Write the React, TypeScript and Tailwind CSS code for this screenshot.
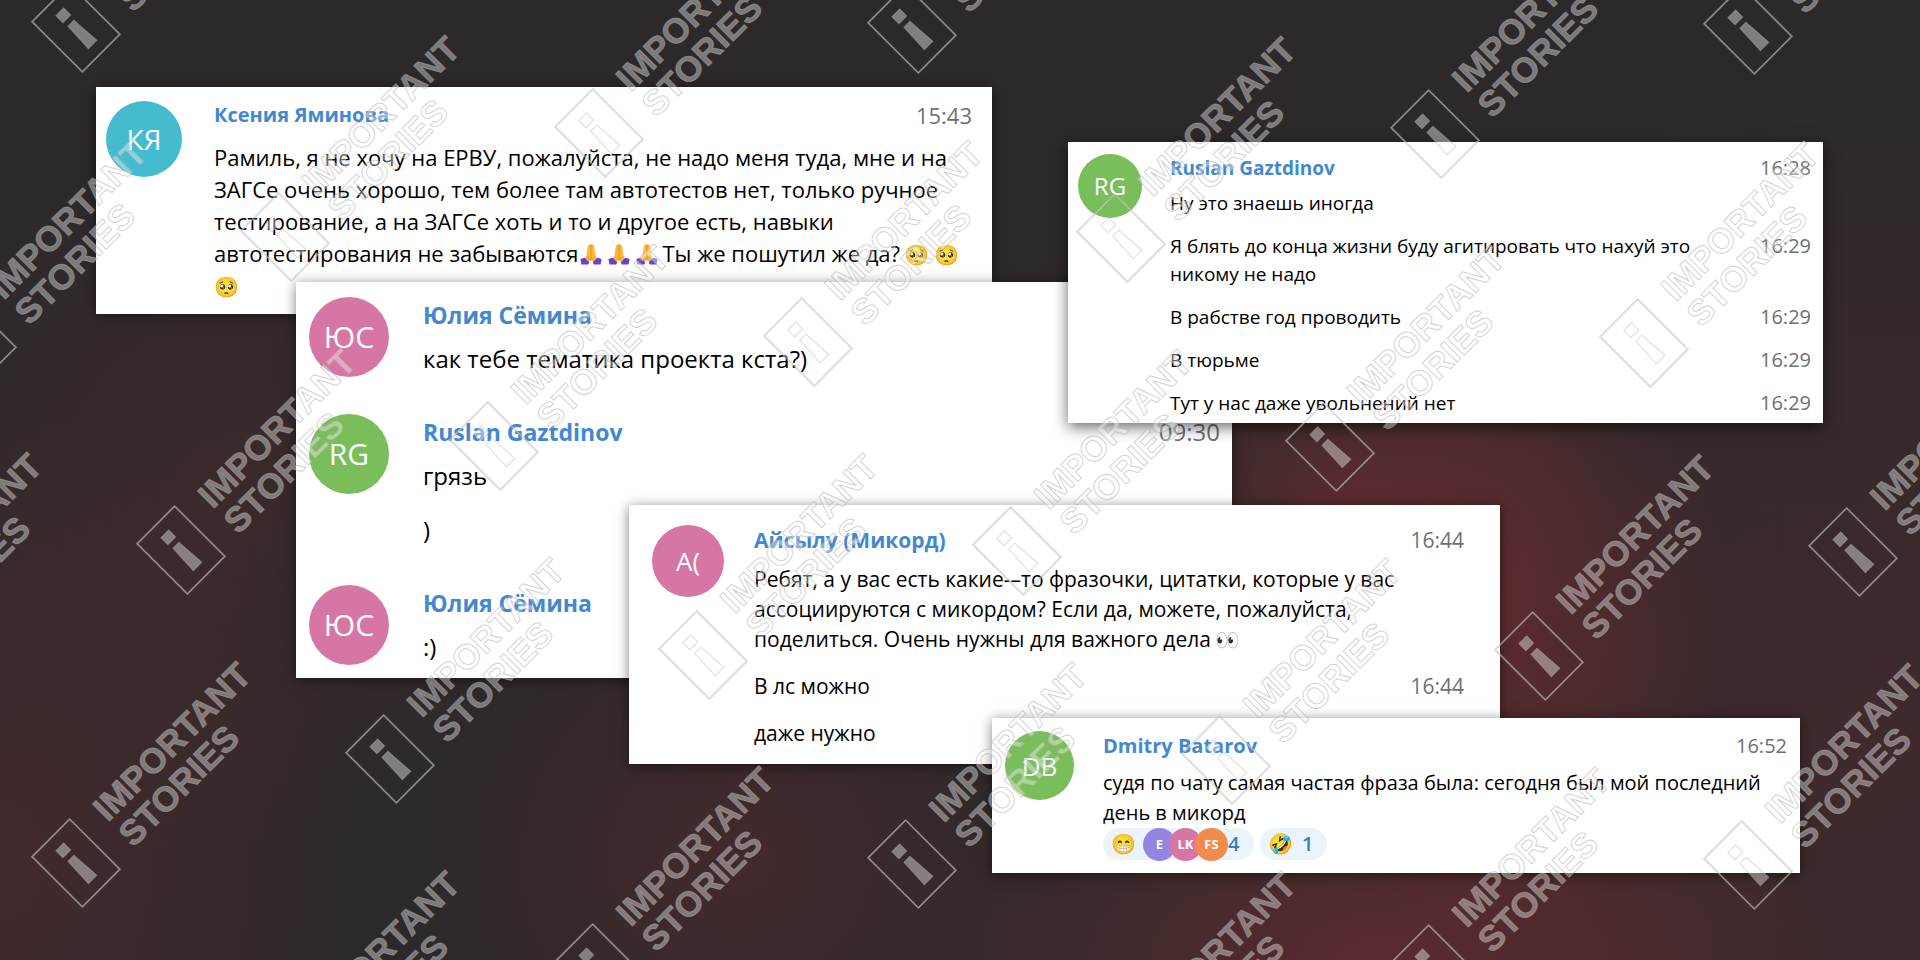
import type { ReactNode } from "react";

// Watermark tiles sit on a slanted lattice, so the spots are computed once
const marks: { left: number; top: number }[] = [];
for (let i = -8; i <= 8; i++) {
  for (let j = -8; j <= 12; j++) {
    const left = 49 + i * 104.5 + j * 209;
    const top = 827 - i * 313 + j * 209;
    if (left > -260 && left < 1900 && top > -60 && top < 1120) {
      marks.push({ left, top });
    }
  }
}

function Watermark({ left, top }: { left: number; top: number }) {
  return (
    <div
      className="absolute flex items-center gap-6 origin-[27px_36px] -rotate-45"
      style={{ left, top }}
    >
      <svg width="54" height="72" viewBox="0 0 54 72" className="shrink-0 overflow-visible">
        <rect x="0.5" y="0.5" width="53" height="71" fill="none" stroke="#b0b0b0" strokeOpacity="0.5" strokeWidth="2" />
        <rect x="0.5" y="0.5" width="53" height="71" fill="none" stroke="#fff" strokeOpacity="0.4" strokeWidth="0.8" />
        <g fill="#fff" fillOpacity="0.4" stroke="#b0b0b0" strokeOpacity="0.45">
          <path d="M21.500 13h11v10h-11z" />
          <path d="M22.500 29h8.500l2 30.500h-12z" />
        </g>
      </svg>
      <div className="font-['Liberation_Sans',sans-serif] text-[35px] leading-9 font-bold text-white/40 [-webkit-text-stroke:1px_rgba(168,168,168,0.5)]">
        <p>IMPORTANT</p>
        <p>STORIES</p>
      </div>
    </div>
  );
}

// Folded hands with purple sleeves
function Hands() {
  return (
    <svg viewBox="0 0 24 24" className="ml-0.5 mr-1 inline-block size-[22px] align-[-3px]">
      <path d="M11.500 1.500C9.500 1 8.500 3 8.300 5L7 14l-2.500 4 4 3.500 3.500-3 3.500 3 4-3.500L17 14l-1.300-9c-.2-2-1.200-4-3.200-3.500z" fill="#fcb93c" />
      <path d="M12 2v16.500" stroke="#e08a1e" strokeWidth="1" />
      <path d="M8.500 14.500c0 2 1.500 3.500 3.500 4 2-.5 3.500-2 3.500-4" fill="none" stroke="#e89a28" />
      <path d="M0.500 17.500l4.500-1.500 5 5-1 2.500H1.500z" fill="#6a3fd0" />
      <path d="M23.500 17.500L19 16l-5 5 1 2.500h7.500z" fill="#6a3fd0" />
    </svg>
  );
}

function Name({ children }: { children: ReactNode }) {
  return <h2 className="font-bold text-[#4387d2]">{children}</h2>;
}

function Time({ children }: { children: ReactNode }) {
  return <time className="text-[#6d7175]">{children}</time>;
}

function App() {
  return (
    <main className="relative min-h-screen overflow-hidden font-['Open_Sans','Noto_Sans',sans-serif] text-black bg-[#2d292b] bg-[radial-gradient(240px_320px_at_1490px_620px,rgba(120,44,48,0.6),transparent),radial-gradient(260px_220px_at_1340px_500px,rgba(120,44,48,0.5),transparent),radial-gradient(480px_240px_at_1380px_960px,rgba(120,44,48,0.6),transparent),radial-gradient(360px_460px_at_0px_860px,rgba(110,42,46,0.35),transparent),radial-gradient(340px_360px_at_230px_500px,rgba(100,42,46,0.26),transparent),radial-gradient(320px_300px_at_740px_860px,rgba(110,42,46,0.34),transparent),radial-gradient(640px_680px_at_1860px_760px,rgba(100,42,46,0.34),transparent)]">
      {/* Ксения Яминова */}
      <article className="absolute left-[96px] top-[87px] w-[896px] flex gap-8 bg-white pl-[10px] pr-5 pt-3 pb-[13px] text-[22px] leading-8 shadow-[0_2px_12px_rgba(0,0,0,0.5)]">
        <div className="mt-0.5 flex size-[76px] shrink-0 items-center justify-center rounded-full bg-[#45bbcf] text-[28px] text-white">
          КЯ
        </div>
        <div className="grow whitespace-nowrap">
          <div className="flex justify-between">
            <div className="text-[20px]">
              <Name>Ксения Яминова</Name>
            </div>
            <Time>15:43</Time>
          </div>
          <p className="mt-[10px]">
            Рамиль, я не хочу на ЕРВУ, пожалуйста, не надо меня туда, мне и на
            <br />
            ЗАГСе очень хорошо, тем более там автотестов нет, только ручное
            <br />
            тестирование, а на ЗАГСе хоть и то и другое есть, навыки
            <br />
            автотестирования не забываются
            <Hands />
            <Hands />
            <Hands />
            Ты же пошутил же да?
            <span className="ml-1 text-[20px] leading-none">🥺 🥺</span>
            <br />
            <span className="text-[20px] leading-none">🥺</span>
          </p>
        </div>
      </article>

      {/* Юлия Сёмина */}
      <article className="absolute left-[296px] top-[282px] w-[936px] flex flex-col gap-[37px] bg-white pl-[13px] pr-3 pt-[15px] pb-[13px] text-[24px] leading-9 shadow-[0_2px_12px_rgba(0,0,0,0.5)]">
        <div className="flex gap-[34px]">
          <div className="flex size-20 shrink-0 items-center justify-center rounded-full bg-[#d676a4] text-[30px] text-white">
            ЮС
          </div>
          <div className="grow">
            <div className="text-[23px]">
              <Name>Юлия Сёмина</Name>
            </div>
            <p className="mt-2">как тебе тематика проекта кста?)</p>
          </div>
        </div>
        <div className="flex gap-[34px]">
          <div className="flex size-20 shrink-0 items-center justify-center rounded-full bg-[#79be5b] text-[30px] text-white">
            RG
          </div>
          <div className="grow">
            <div className="flex justify-between">
              <div className="text-[23px]">
                <Name>Ruslan Gaztdinov</Name>
              </div>
              <Time>09:30</Time>
            </div>
            <p className="mt-2">грязь</p>
            <p className="mt-[18px]">)</p>
          </div>
        </div>
        <div className="flex gap-[34px]">
          <div className="flex size-20 shrink-0 items-center justify-center rounded-full bg-[#d676a4] text-[30px] text-white">
            ЮС
          </div>
          <div className="grow">
            <div className="text-[23px]">
              <Name>Юлия Сёмина</Name>
            </div>
            <p className="mt-2">:)</p>
          </div>
        </div>
      </article>

      {/* Ruslan Gaztdinov */}
      <article className="absolute left-[1068px] top-[142px] w-[755px] flex gap-7 bg-white pl-[10px] pr-3 pt-3 pb-[6px] text-[19px] leading-7 shadow-[0_4px_14px_rgba(0,0,0,0.6)]">
        <div className="flex size-16 shrink-0 items-center justify-center rounded-full bg-[#79be5b] text-[24px] text-white">
          RG
        </div>
        <div className="flex grow flex-col gap-[15px]">
          <div>
            <div className="flex justify-between">
              <Name>Ruslan Gaztdinov</Name>
              <div className="text-[20px]">
                <Time>16:28</Time>
              </div>
            </div>
            <p className="mt-[7px]">Ну это знаешь иногда</p>
          </div>
          <div className="flex justify-between">
            <p>
              Я блять до конца жизни буду агитировать что нахуй это
              <br />
              никому не надо
            </p>
            <div className="text-[20px]">
              <Time>16:29</Time>
            </div>
          </div>
          <div className="flex justify-between">
            <p>В рабстве год проводить</p>
            <div className="text-[20px]">
              <Time>16:29</Time>
            </div>
          </div>
          <div className="flex justify-between">
            <p>В тюрьме</p>
            <div className="text-[20px]">
              <Time>16:29</Time>
            </div>
          </div>
          <div className="flex justify-between">
            <p>Тут у нас даже увольнений нет</p>
            <div className="text-[20px]">
              <Time>16:29</Time>
            </div>
          </div>
        </div>
      </article>

      {/* Айсылу (Микорд) */}
      <article className="absolute left-[629px] top-[505px] w-[871px] flex gap-[30px] bg-white pl-[23px] pr-9 pt-5 pb-4 text-[21px] leading-[30px] shadow-[0_2px_12px_rgba(0,0,0,0.5)]">
        <div className="flex size-[72px] shrink-0 items-center justify-center rounded-full bg-[#d676a4] text-[26px] text-white">
          А(
        </div>
        <div className="flex grow flex-col gap-[17px]">
          <div>
            <div className="flex justify-between">
              <Name>Айсылу (Микорд)</Name>
              <Time>16:44</Time>
            </div>
            <p className="mt-[9px] whitespace-nowrap">
              Ребят, а у вас есть какие-–то фразочки, цитатки, которые у вас
              <br />
              ассоциируются с микордом? Если да, можете, пожалуйста,
              <br />
              поделиться. Очень нужны для важного дела
              <span className="ml-1 text-[20px] leading-none">👀</span>
            </p>
          </div>
          <div className="flex justify-between">
            <p>В лс можно</p>
            <Time>16:44</Time>
          </div>
          <p>даже нужно</p>
        </div>
      </article>

      {/* Dmitry Batarov */}
      <article className="absolute left-[992px] top-[718px] w-[808px] flex gap-[29px] bg-white p-[13px] text-[20px] leading-[30px] shadow-[0_2px_12px_rgba(0,0,0,0.5)]">
        <div className="flex size-[69px] shrink-0 items-center justify-center rounded-full bg-[#79be5b] text-[26px] text-white">
          DB
        </div>
        <div className="grow whitespace-nowrap">
          <div className="flex justify-between">
            <Name>Dmitry Batarov</Name>
            <Time>16:52</Time>
          </div>
          <p className="mt-[7px]">
            судя по чату самая частая фраза была: сегодня был мой последний
            <br />
            день в микорд
          </p>
          <div className="flex gap-[6px] leading-8 font-semibold text-[#3b7dbf]">
            <button className="flex h-8 w-[151px] items-center rounded-full bg-[#ebf4fb] pl-2">
              <span className="w-8 text-left text-[20px] font-normal">😁</span>
              <span className="flex -space-x-[7px] text-[13px] font-bold text-white">
                <span className="size-[33px] rounded-full bg-[#9385e2] text-center">E</span>
                <span className="size-[33px] rounded-full bg-[#d676a4] text-center">LK</span>
                <span className="size-[33px] rounded-full bg-[#f08b4b] text-center">FS</span>
              </span>
              4
            </button>
            <button className="flex h-8 w-[67px] items-center rounded-full bg-[#ebf4fb] pl-2">
              <span className="w-[34px] text-left text-[20px] font-normal">🤣</span>1
            </button>
          </div>
        </div>
      </article>

      {/* Watermark */}
      <div className="pointer-events-none absolute inset-0 overflow-hidden" aria-hidden="true">
        {marks.map((mark) => (
          <Watermark key={`${mark.left} ${mark.top}`} left={mark.left} top={mark.top} />
        ))}
      </div>
    </main>
  );
}

export default App;
